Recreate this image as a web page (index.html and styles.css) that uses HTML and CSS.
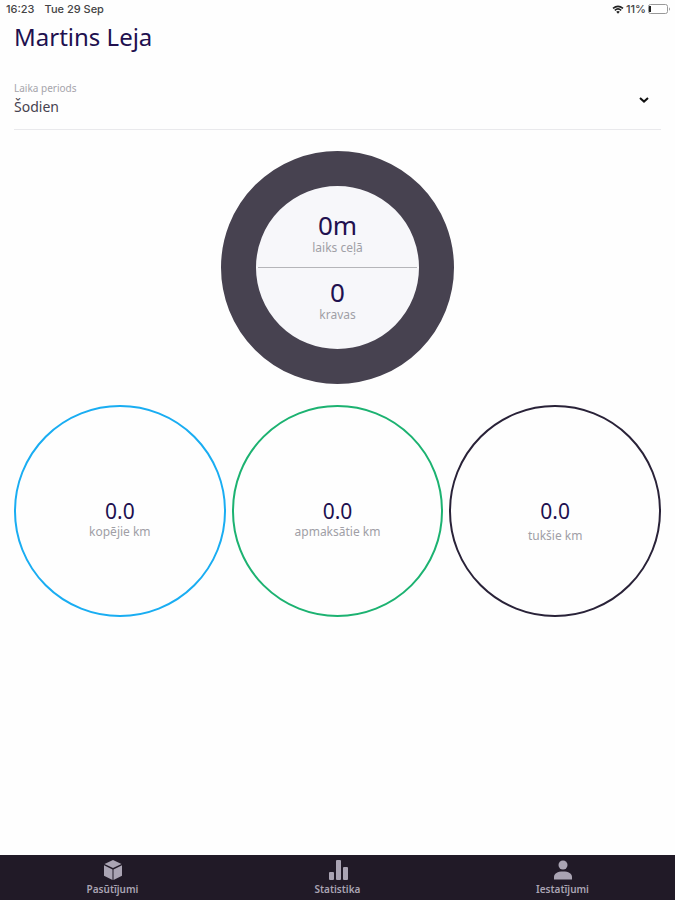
FILE: index.html
```html
<!DOCTYPE html>
<html lang="lv">
<head>
    <meta charset="UTF-8">
    <meta name="viewport" content="width=device-width, initial-scale=1">
    <title>Statistika</title>
    <link rel="stylesheet" href="styles.css">
</head>
<body>
<div class="status-bar">
    <span>16:23</span>
    <span>Tue 29 Sep</span>
    <div class="status-right">
        <svg class="wifi" viewBox="0 0 12 9" width="12" height="9">
            <path d="M1 3.4Q6-.8 11 3.4M2.8 5.3Q6 2.6 9.2 5.3" fill="none" stroke="#222" stroke-width="1.6"/>
            <path d="M4.2 6.7Q6 5.2 7.8 6.7L6 8.8z" fill="#222"/>
        </svg>
        <span>11%</span>
        <svg class="battery" viewBox="0 0 23 10" width="23" height="10">
            <rect x=".5" y=".5" width="19" height="9" rx="2" fill="#fff" stroke="#999"/>
            <rect x="1" y="2" width="2" height="6" fill="#222"/>
            <path d="M21 3.2q2 1.8 0 3.6z" fill="#999"/>
        </svg>
    </div>
</div>
<main>
    <h1>Martins Leja</h1>
    <div class="period">
        <label for="period">Laika periods</label>
        <select id="period">
            <option>Šodien</option>
        </select>
        <svg class="chevron" viewBox="0 0 10 6" width="10" height="6">
            <path d="M1 1L5 4.6 9 1" fill="none" stroke="#111" stroke-width="2"/>
        </svg>
    </div>
    <div class="ring">
        <div class="ring-half">
            <strong>0m</strong>
            <span>laiks ceļā</span>
        </div>
        <div class="ring-half">
            <strong>0</strong>
            <span>kravas</span>
        </div>
    </div>
    <div class="circles">
        <div class="circle total">
            <strong>0.0</strong>
            <span>kopējie km</span>
        </div>
        <div class="circle paid">
            <strong>0.0</strong>
            <span>apmaksātie km</span>
        </div>
        <div class="circle empty">
            <strong>0.0</strong>
            <span>tukšie km</span>
        </div>
    </div>
</main>
<nav>
    <a href="#orders">
        <svg viewBox="0 0 20 20" width="20" height="20">
            <path d="M10 0l8.500 4L10 8 1.500 4z"/>
            <path d="M1 5.300l8.500 4.200V20L1 15.800z"/>
            <path d="M19 5.300l-8.500 4.200V20l8.500-4.200z"/>
        </svg>
        Pasūtījumi
    </a>
    <a href="#stats">
        <svg viewBox="0 0 20 20" width="20" height="20">
            <rect x="1" y="12" width="5" height="8" rx="1"/>
            <rect x="8" y="0" width="5" height="20" rx="1"/>
            <rect x="15" y="7" width="5" height="13" rx="1"/>
        </svg>
        Statistika
    </a>
    <a href="#settings">
        <svg viewBox="0 0 20 20" width="20" height="20">
            <circle cx="10" cy="5" r="4.500"/>
            <path d="M1 19.500v-2.500c0-3.500 3.500-5.500 9-5.500s9 2 9 5.500v2.500z"/>
        </svg>
        Iestatījumi
    </a>
</nav>
</body>
</html>
```
FILE: styles.css
```css
* {
    box-sizing: border-box;
    margin: 0;
    padding: 0;
}

body {
    display: flex;
    flex-direction: column;
    min-height: 100vh;
    background: #fefefe;
    font-family: "Noto Sans", sans-serif;
}

.status-bar {
    display: flex;
    align-items: center;
    gap: 10px;
    height: 18px;
    padding: 0 4px 0 6px;
    font-family: Inter, sans-serif;
    font-size: 11px;
    font-weight: 500;
    color: #444;
}

.status-right {
    display: flex;
    align-items: center;
    gap: 2px;
    margin-left: auto;
}

main {
    flex: 1;
    padding: 0 14px;
}

h1 {
    font-size: 24px;
    font-weight: 400;
    line-height: 38px;
    color: #21104f;
}

.period {
    display: grid;
    grid-template-columns: 1fr auto;
    align-items: center;
    margin-top: 25px;
    padding-bottom: 10px;
    border-bottom: 1px solid #e9e9ec;
}

.period label {
    grid-column: 1;
    font-size: 10px;
    line-height: 14px;
    color: #a5a4ab;
}

.period select {
    grid-column: 1;
    appearance: none;
    border: none;
    background: none;
    font-family: inherit;
    font-size: 14px;
    line-height: 24px;
    color: #46424f;
}

.chevron {
    grid-column: 2;
    grid-row: 1 / 3;
    margin-right: 12px;
}

.ring {
    display: grid;
    grid-template-rows: 1fr 1fr;
    width: 36%;
    aspect-ratio: 1;
    margin: 21px auto;
    padding: 0 2px;
    border: 35px solid #474250;
    border-radius: 50%;
    background: #f7f7fa;
}

.ring-half {
    display: flex;
    flex-direction: column;
    align-items: center;
    justify-content: flex-end;
    padding-bottom: 12px;
}

.ring-half + .ring-half {
    justify-content: flex-start;
    padding: 8px 0 0;
    border-top: 1px solid #b5b5b9;
}

strong {
    font-weight: 400;
    color: #21104f;
}

.ring strong {
    font-size: 26px;
    line-height: 32px;
}

.ring span,
.circle span {
    font-size: 12px;
    line-height: 14px;
    color: #a09fa6;
}

.circles {
    display: grid;
    grid-template-columns: repeat(3, 1fr);
    gap: 6px;
}

.circle {
    display: grid;
    grid-template-rows: 1fr auto 1fr;
    justify-items: center;
    aspect-ratio: 1;
    border: 2px solid;
    border-radius: 50%;
}

.circle strong {
    grid-row: 2;
    font-size: 21px;
    line-height: 28px;
}

.circle span {
    grid-row: 3;
}

.total {
    border-color: #19adf2;
}

.paid {
    border-color: #1cb271;
}

.empty {
    row-gap: 4px;
    border-color: #292238;
}

nav {
    display: flex;
    height: 45px;
    background: #211a27;
}

nav a {
    display: flex;
    flex: 1;
    flex-direction: column;
    align-items: center;
    padding-top: 5px;
    font-size: 10px;
    font-weight: 600;
    line-height: 18px;
    color: #aaa4b3;
    text-decoration: none;
}

nav svg {
    fill: #aaa4b3;
}
```
